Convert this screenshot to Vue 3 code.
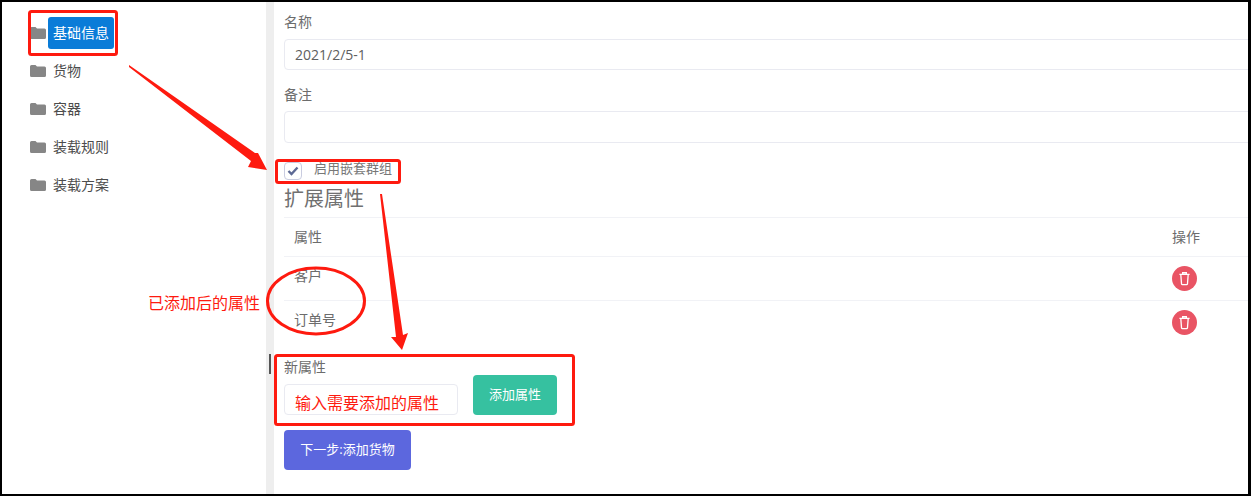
<template>
  <div class="frame">
    <aside class="sidebar">
      <div v-for="item in menu" :key="item" class="menu-item">
        <svg class="folder" viewBox="0 0 16 12" width="16" height="12">
          <path d="M1.500 0h4l1.500 1.500h7.500A1.500 1.500 0 0 1 16 3v7.500a1.500 1.500 0 0 1-1.500 1.500h-13A1.500 1.500 0 0 1 0 10.500v-9A1.500 1.500 0 0 1 1.500 0z" fill="#868686" />
        </svg>
        <span class="menu-label" :class="{ active: item === '基础信息' }">{{ item }}</span>
      </div>
    </aside>
    <div class="gutter"></div>
    <main class="main">
      <div class="content">
        <label class="field-label first">名称</label>
        <div class="input name-input">2021/2/5-1</div>
        <label class="field-label second">备注</label>
        <div class="input note-input"></div>
        <div class="check-row">
          <span class="checkbox">
            <svg viewBox="0 0 12 10" width="12" height="10">
              <path d="M1.500 5l3 3 6-6.500" fill="none" stroke="#5d6a95" stroke-width="2.400" />
            </svg>
          </span>
          <span class="check-text">启用嵌套群组</span>
        </div>
        <h4 class="section-title">扩展属性</h4>
        <div class="table">
          <div class="table-row head">
            <div>属性</div>
            <div>操作</div>
          </div>
          <div v-for="attr in attrs" :key="attr" class="table-row">
            <div>{{ attr }}</div>
            <div>
              <button class="del-btn">
                <svg viewBox="0 0 14 16" width="13" height="15">
                  <path d="M1.500 3.500h11M5 3.500V1.800h4v1.700M3 3.500l.8 10.200a1 1 0 0 0 1 .8h4.400a1 1 0 0 0 1-.8L11 3.500" fill="none" stroke="#fff" stroke-width="1.400" />
                </svg>
              </button>
            </div>
          </div>
        </div>
        <div class="new-row">
          <div class="new-field">
            <label class="field-label new-label">新属性</label>
            <div class="input new-input"></div>
          </div>
          <button class="btn btn-add">添加属性</button>
        </div>
        <button class="btn btn-next">下一步:添加货物</button>
      </div>
    </main>

    <!-- 标注层 -->
    <svg class="notes" viewBox="0 0 1251 496" width="1251" height="496">
      <g fill="none" stroke="#fe1a0f" stroke-width="3">
        <rect x="29.500" y="11.500" width="87" height="43" rx="2" />
        <rect x="276.500" y="160.500" width="123" height="22" rx="2" />
        <rect x="275.500" y="355.500" width="298" height="69" rx="2" />
        <ellipse cx="316" cy="301" rx="48.500" ry="33" />
      </g>
      <polygon fill="#fe1a0f" points="129,65 129,67 251,161 248,167 267,170 258,153 255,153" />
      <polygon fill="#fe1a0f" points="380,194 382,194 403,335 408,333 402,350 391,337 396,337" />
      <rect x="269" y="354" width="2" height="20" fill="#555" />
    </svg>
    <span class="note-text note-added">已添加后的属性</span>
    <span class="note-text note-input-tip">输入需要添加的属性</span>
  </div>
</template>

<script setup>
const menu = ['基础信息', '货物', '容器', '装载规则', '装载方案']
const attrs = ['客户', '订单号']
</script>

<style>
html,
body {
  margin: 0;
  overflow: hidden;
}
</style>

<style scoped>
.frame {
  position: relative;
  box-sizing: border-box;
  width: 1251px;
  height: 496px;
  display: flex;
  overflow: hidden;
  background: #fff;
  border-style: solid;
  border-color: #000;
  border-width: 2px 3px 2px 2px;
  font-family: "Open Sans", "Noto Sans CJK SC", sans-serif;
  font-size: 14px;
  color: #6c6c6c;
}

.sidebar {
  width: 264px;
  flex-shrink: 0;
  padding-top: 15px;
  box-sizing: border-box;
}

.menu-item {
  height: 32px;
  margin-bottom: 6px;
  padding-left: 28px;
  display: flex;
  align-items: center;
}

.folder {
  flex-shrink: 0;
}

.menu-label {
  margin-left: 7px;
  color: #4c4c4c;
  line-height: 32px;
}

.menu-label.active {
  margin-left: 2px;
  padding: 0 5px;
  background: #0a7cd8;
  border-radius: 3px;
  color: #fff;
}

.gutter {
  width: 8px;
  flex-shrink: 0;
  background: #eeeeee;
}

.main {
  flex: 1;
  min-width: 0;
  overflow: hidden;
  padding-left: 10px;
}

.content {
  width: 1000px;
}

.field-label {
  display: block;
  line-height: 20px;
}

.first {
  margin: 10px 0 7px;
}

.second {
  margin: 15px 0 6px;
}

.input {
  box-sizing: border-box;
  border: 1px solid #e9eaf1;
  border-radius: 4px;
  background: #fff;
  padding: 0 10px;
  color: #606060;
}

.name-input {
  height: 31px;
  line-height: 29px;
}

.note-input {
  height: 32px;
}

.check-row {
  display: flex;
  align-items: center;
  height: 18px;
  margin-top: 17px;
}

.checkbox {
  box-sizing: border-box;
  width: 18px;
  height: 18px;
  margin-top: 3px;
  border: 1px solid #c9cce0;
  border-radius: 4px;
  display: flex;
  align-items: center;
  justify-content: center;
}

.check-text {
  margin-left: 12px;
  margin-top: -3px;
  font-size: 13px;
  color: #777;
}

.section-title {
  margin: 6px 0 3px;
  font-size: 20px;
  font-weight: 400;
  line-height: 30px;
  color: #707070;
}

.table-row {
  display: grid;
  grid-template-columns: 1fr 112px;
  height: 44px;
  padding-left: 10px;
  box-sizing: border-box;
  border-top: 1px solid #f1f2f6;
  line-height: 20px;
  padding-top: 9px;
}

.table-row.head {
  height: 39px;
}

.del-btn {
  display: flex;
  align-items: center;
  justify-content: center;
  width: 25px;
  height: 25px;
  padding: 0;
  border: none;
  border-radius: 50%;
  background: #e95464;
}

.new-row {
  display: flex;
  align-items: flex-end;
  gap: 15px;
  margin-top: 13px;
}

.new-label {
  margin-bottom: 7px;
}

.new-input {
  width: 174px;
  height: 31px;
}

.btn {
  display: block;
  border: none;
  border-radius: 4px;
  color: #fff;
  font-family: inherit;
  font-size: 13px;
  height: 40px;
  padding: 0 0 3px;
}

.btn-add {
  width: 84px;
  background: #36c1a0;
}

.btn-next {
  width: 127px;
  margin-top: 15px;
  background: #5c67de;
}

.notes {
  position: absolute;
  left: -2px;
  top: -2px;
  pointer-events: none;
}

.note-text {
  position: absolute;
  color: #fe1a0f;
  white-space: nowrap;
}

.note-added {
  left: 146px;
  top: 290px;
  font-size: 16px;
  line-height: 22px;
}

.note-input-tip {
  left: 293px;
  top: 390px;
  font-size: 16px;
  line-height: 22px;
}
</style>
